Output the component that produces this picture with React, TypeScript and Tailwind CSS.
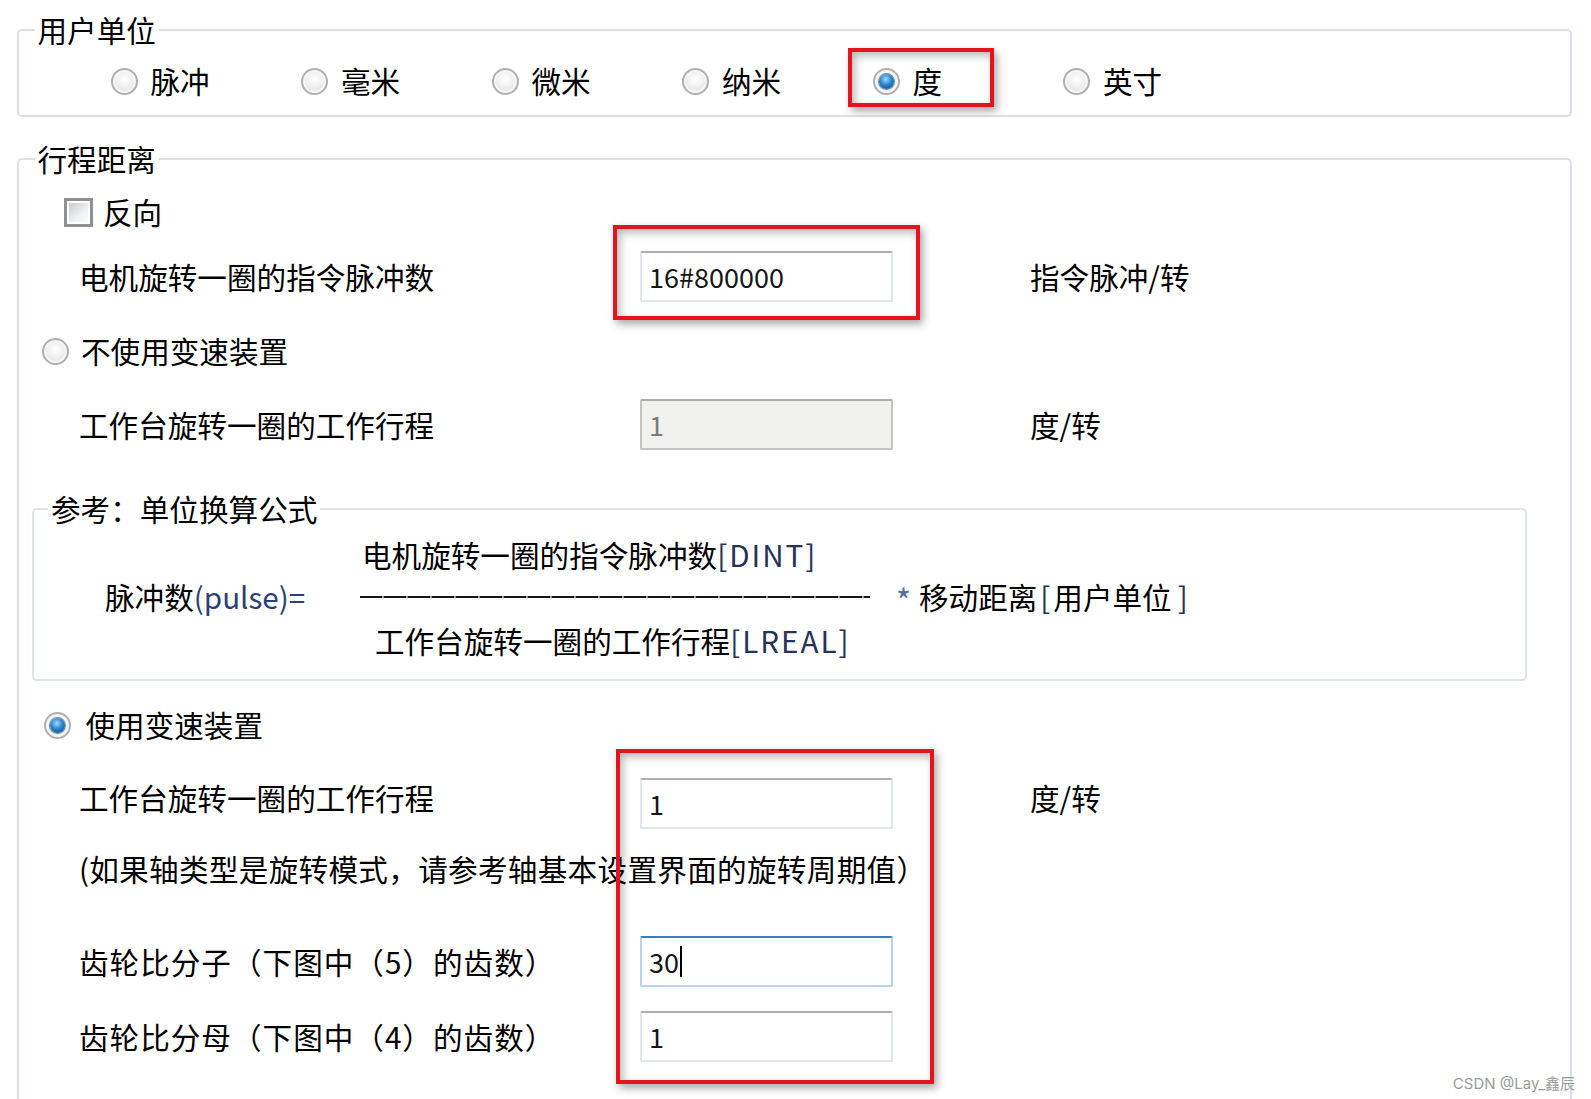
import React from 'react';

const RED_BOX =
  'pointer-events-none absolute border-[4px] border-[#e3141d] shadow-[3px_4px_8px_rgba(0,0,0,0.35),inset_3px_4px_8px_rgba(0,0,0,0.28)]';

const Radio: React.FC<{ checked?: boolean }> = ({ checked }) => (
  <span className="flex h-[27px] w-[27px] shrink-0 items-center justify-center rounded-full border-2 border-[#b0b0b0] bg-[radial-gradient(circle_at_50%_40%,#ffffff_0,#f0f0f0_45%,#d2d2d2_100%)] shadow-[inset_0_0_0_2px_#f6f6f6]">
    {checked && (
      <span className="h-[15px] w-[15px] rounded-full bg-[radial-gradient(circle_at_45%_35%,#9fdcff_0,#2a86cc_45%,#0c3f7c_100%)] shadow-[0_0_0_1px_#6f8fa8]" />
    )}
  </span>
);

const Checkbox: React.FC = () => (
  <span className="flex h-[29px] w-[29px] shrink-0 border-[3px] border-[#8f9090] bg-white p-[2px]">
    <span className="h-full w-full bg-[linear-gradient(135deg,#c9ccd0_0,#eef0f2_60%,#fafbfb_100%)]" />
  </span>
);

type FieldProps = { value: string; variant?: 'normal' | 'disabled' | 'focused' };

const Field: React.FC<FieldProps> = ({ value, variant = 'normal' }) => {
  const tone =
    variant === 'disabled'
      ? 'border-[#c4c4c4] border-t-[#acacac] bg-[#f1f1f0] text-[#7a7a7a]'
      : variant === 'focused'
        ? 'border-[#b9d3ec] border-t-[#3c7fb1] bg-white text-[#151515]'
        : 'border-[#e0e6ee] border-t-[#abadb3] bg-white text-[#151515]';
  return (
    <div className={`flex h-[51px] w-[253px] items-center rounded-[2px] border-2 px-[7px] text-[27px] leading-none ${tone}`}>
      <span>{value}</span>
      {variant === 'focused' && <span className="ml-[1px] h-[31px] w-[2px] bg-black" />}
    </div>
  );
};

const UnitRadio: React.FC<{ label: string; checked?: boolean; marked?: boolean }> = ({ label, checked, marked }) => (
  <div className="relative flex h-[40px] w-[190.5px] items-center gap-[13px]">
    <Radio checked={checked} />
    <span>{label}</span>
    {marked && <div className={`${RED_BOX} left-[-24.5px] top-[-13px] h-[59px] w-[146px]`} />}
  </div>
);

const Row: React.FC<{
  label: React.ReactNode;
  field: React.ReactNode;
  unit?: string;
  className?: string;
  textClass?: string;
}> = ({ label, field, unit, className = '', textClass = '' }) => (
  <div className={`flex h-[51px] items-center pl-[60px] ${className}`}>
    <div className={`w-[561px] ${textClass}`}>{label}</div>
    {field}
    {unit && <div className={`ml-[137px] ${textClass}`}>{unit}</div>}
  </div>
);

export default function App() {
  return (
    <div className="relative h-[1099px] w-[1591px] overflow-hidden bg-white pt-[13px] font-['Noto_Sans_CJK_SC',sans-serif] text-[29.6px] leading-none text-black">
      {/* 用户单位 */}
      <fieldset className="ml-[17px] w-[1555px] rounded-[5px] border-2 border-[#d9e1e8] pb-[14px] pt-[14px]">
        <legend className="ml-[15.5px] px-[3px] leading-[34px]">用户单位</legend>
        <div className="flex pl-[91.5px]">
          <UnitRadio label="脉冲" />
          <UnitRadio label="毫米" />
          <UnitRadio label="微米" />
          <UnitRadio label="纳米" />
          <UnitRadio label="度" checked marked />
          <UnitRadio label="英寸" />
        </div>
      </fieldset>

      {/* 行程距离 */}
      <fieldset className="ml-[17px] mt-[25px] h-[1000px] w-[1555px] rounded-[5px] border-2 border-[#d9e1e8] pt-[16px]">
        <legend className="ml-[15.5px] px-[3px] leading-[34px]">行程距离</legend>

        <div className="flex h-[40px] items-center gap-[10px] pl-[45px]">
          <Checkbox />
          <span>反向</span>
        </div>

        <Row
          className="mt-[19px]"
          label="电机旋转一圈的指令脉冲数"
          field={
            <div className="relative">
              <Field value="16#800000" />
              <div className={`${RED_BOX} left-[-27px] top-[-26px] h-[95px] w-[307px]`} />
            </div>
          }
          unit="指令脉冲/转"
        />

        <div className="mt-[29px] flex h-[40px] items-center gap-[12.5px] pl-[22.5px]">
          <Radio />
          <span>不使用变速装置</span>
        </div>

        <Row className="mt-[28px]" label="工作台旋转一圈的工作行程" field={<Field value="1" variant="disabled" />} unit="度/转" />

        {/* 参考：单位换算公式 */}
        <fieldset className="ml-[13px] mt-[42px] w-[1495px] rounded-[5px] border-2 border-[#dde4ea] pb-[18px] pt-[9px]">
          <legend className="ml-[14px] px-[3px] leading-[34px]">参考：单位换算公式</legend>
          <div className="flex h-[40px] items-center pl-[328px]">
            电机旋转一圈的指令脉冲数<span className="tracking-[2px] text-[#26325a]">[DINT]</span>
          </div>
          <div className="mt-[2px] flex h-[40px] items-center pl-[71px]">
            <span className="w-[201px]">
              脉冲数<span className="text-[#2b3f78]">(pulse)=</span>
            </span>
            <span className="ml-[54px] h-[2px] w-[510px] bg-[repeating-linear-gradient(90deg,#151515_0,#151515_22px,#c98080_22px,#c98080_24px)]" />
            <span className="ml-[26px] flex items-center">
              <span className="mr-[8px] translate-y-[2px] text-[32px] text-[#4d6f94]">*</span>
              移动距离<span className="mx-[3px] text-[#26325a]">[</span>用户单位<span className="mx-[6px] text-[#26325a]">]</span>
            </span>
          </div>
          <div className="mt-[4px] flex h-[40px] items-center pl-[341px]">
            工作台旋转一圈的工作行程<span className="tracking-[2px] text-[#26325a]">[LREAL]</span>
          </div>
        </fieldset>

        <div className="mt-[24px] flex h-[40px] items-center gap-[15px] pl-[24.5px]">
          <Radio checked />
          <span>使用变速装置</span>
        </div>

        <Row
          className="mt-[33px]"
          textClass="pb-[12px]"
          label="工作台旋转一圈的工作行程"
          field={
            <div className="relative">
              <Field value="1" />
              <div className={`${RED_BOX} left-[-24px] top-[-29px] h-[335px] w-[318px] z-10`} />
            </div>
          }
          unit="度/转"
        />

        <div className="mt-[20px] flex h-[40px] items-center pl-[60px] tracking-[0.3px]">
          (如果轴类型是旋转模式，请参考轴基本设置界面的旋转周期值）
        </div>

        <Row
          className="mt-[47px]"
          textClass="tracking-[1px]"
          label="齿轮比分子（下图中（5）的齿数）"
          field={<Field value="30" variant="focused" />}
        />
        <Row
          className="mt-[24px]"
          textClass="tracking-[1px]"
          label="齿轮比分母（下图中（4）的齿数）"
          field={<Field value="1" />}
        />
      </fieldset>

      <div className="absolute bottom-[8px] right-[16px] font-['Inter','Noto_Sans_CJK_SC',sans-serif] text-[15px] text-[#9a9a9a]">
        CSDN @Lay_鑫辰
      </div>
    </div>
  );
}
